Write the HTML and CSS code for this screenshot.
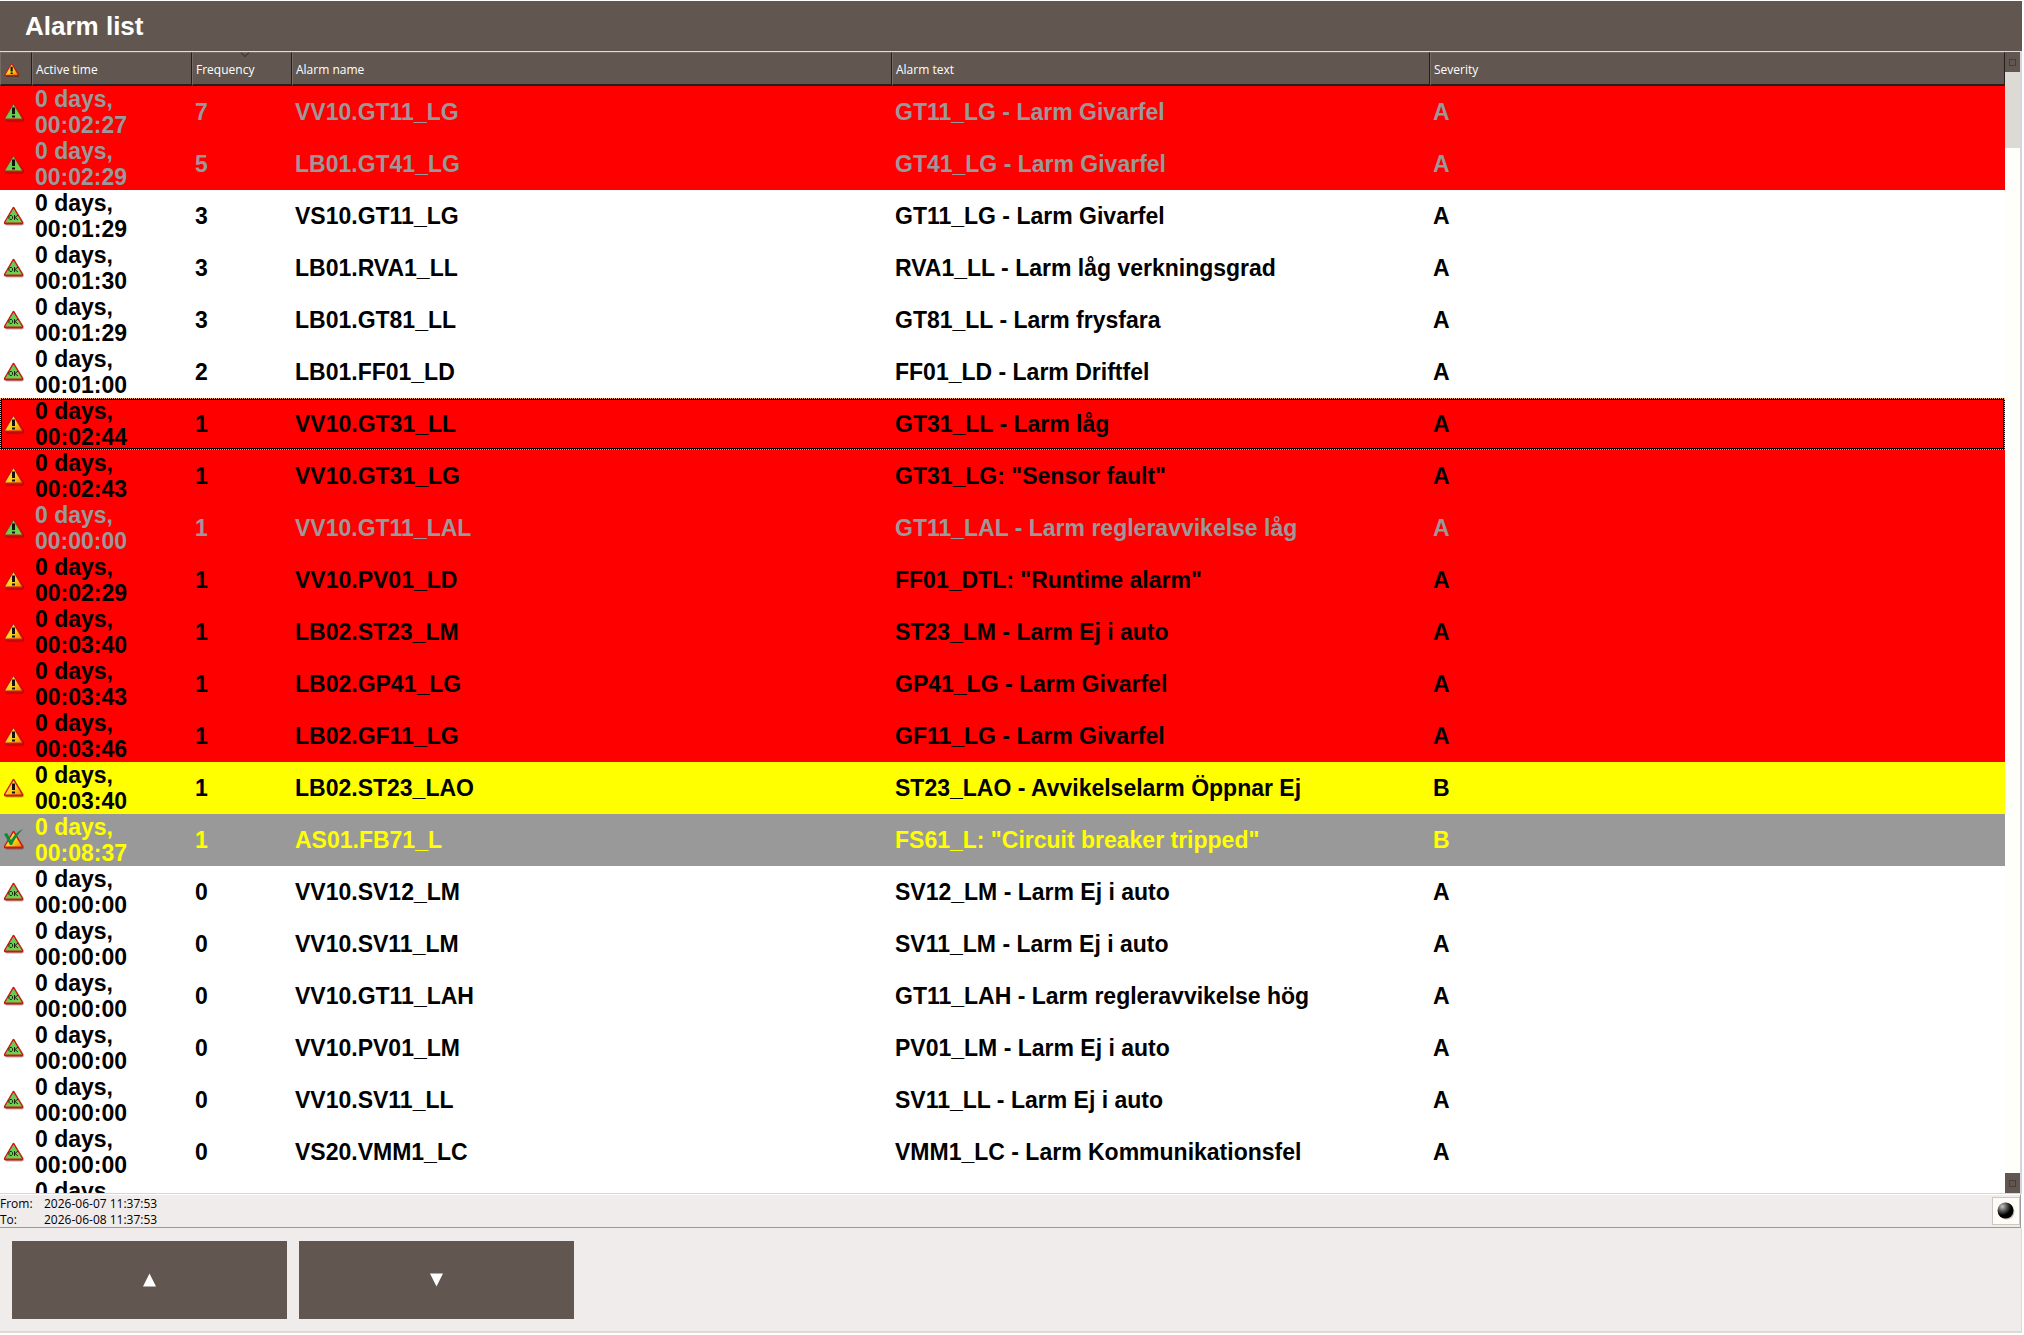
FILE: index.html
```
<!doctype html>
<html lang="sv">
<head>
    <meta charset="UTF-8">
    <meta name="viewport" content="width=device-width, initial-scale=1.0">
    <title>Alarm list</title>
    <link rel="stylesheet" href="styles.css">
</head>
<body>
    <!-- alarm state icons -->
    <svg class="sprite" aria-hidden="true">
        <defs>
            <linearGradient id="gold" x1="0" y1="0" x2="1" y2="1">
                <stop offset="0" stop-color="#ffe27a"/>
                <stop offset=".55" stop-color="#ffd21c"/>
                <stop offset="1" stop-color="#f08a00"/>
            </linearGradient>
            <linearGradient id="green" x1="0" y1="0" x2="1" y2="1">
                <stop offset="0" stop-color="#5fc05a"/>
                <stop offset="1" stop-color="#6fdc48"/>
            </linearGradient>
            <radialGradient id="ball" cx=".3" cy=".25" r=".55">
                <stop offset="0" stop-color="#c4c4c4"/>
                <stop offset=".6" stop-color="#4a4a4a"/>
                <stop offset="1" stop-color="#000"/>
            </radialGradient>
        </defs>
        <symbol id="rim" viewBox="0 0 22 22">
            <path d="M11.5 3L21 17.5Q21 20.5 19 20.5H4Q2 20.5 3 18Z" fill="#000" opacity=".3"/>
            <path d="M9.5 2.5Q10.500 1 11.5 2.5L20 17Q20.5 19.5 18.5 19.5H2.5Q.5 19.5 1 17Z" fill="#d01414"/>
        </symbol>
        <symbol id="active" viewBox="0 0 22 22">
            <use href="#rim"/>
            <path d="M10.5 3.5L18.8 17.5H2.2Z" fill="url(#gold)"/>
            <path d="M9 6.5H12V13H9ZM9 14.5H12V16.5H9Z" fill="#111"/>
        </symbol>
        <symbol id="inactive" viewBox="0 0 22 22">
            <use href="#rim"/>
            <path d="M10.5 3.5L18.8 17.5H2.2Z" fill="url(#green)"/>
            <path d="M9 6.5H12V13H9ZM9 14.5H12V16.5H9Z" fill="#111"/>
        </symbol>
        <symbol id="normal" viewBox="0 0 22 22">
            <use href="#rim"/>
            <path d="M10.5 3.5L18.8 17.5H2.2Z" fill="url(#green)"/>
            <path d="M7 10.5H8.5L9.5 11.5V13.5L8.5 14.5H7L6 13.5V11.5ZM11.5 10V15M15 10L12 12.5L15 15" fill="none" stroke="#111" stroke-width=".9"/>
        </symbol>
        <symbol id="acked" viewBox="0 0 22 22">
            <use href="#rim"/>
            <path d="M10.5 3.5L18.8 17.5H2.2Z" fill="url(#gold)"/>
            <path d="M1 5L4 4L8 11Q13 3 20 0Q13 7 9 16H7Q4 10 1 5Z" fill="#0d8a3c"/>
        </symbol>
    </svg>

    <main class="alarm-page">
        <h1>Alarm list</h1>

        <div class="list">
            <div class="viewport">
                <table>
                    <colgroup>
                        <col class="col-state">
                        <col class="col-time">
                        <col class="col-freq">
                        <col class="col-name">
                        <col class="col-text">
                        <col>
                    </colgroup>
                    <thead>
                        <tr>
                            <th><svg class="icon" role="img" aria-label="State"><use href="#active"/></svg></th>
                            <th>Active time</th>
                            <th class="sorted">Frequency</th>
                            <th>Alarm name</th>
                            <th>Alarm text</th>
                            <th>Severity</th>
                        </tr>
                    </thead>
                    <tbody id="alarms"></tbody>
                </table>
            </div>
            <div class="scrollbar">
                <button class="scroll-btn" aria-label="Scroll up"></button>
                <div class="thumb"></div>
                <button class="scroll-btn" aria-label="Scroll down"></button>
            </div>
        </div>

        <div class="status">
            <dl>
                <dt>From:</dt><dd>2026-06-07 11:37:53</dd>
                <dt>To:</dt><dd>2026-06-08 11:37:53</dd>
            </dl>
            <span class="led">
                <svg viewBox="0 0 18 18"><circle cx="9.5" cy="9.5" r="8" fill="#000" opacity=".25"/><circle cx="8.5" cy="8.5" r="8" fill="url(#ball)"/></svg>
            </span>
        </div>

        <div class="toolbar">
            <button class="nav-btn" aria-label="Up"><svg viewBox="0 0 14 14"><path d="M7 0L14 14H0Z"/></svg></button>
            <button class="nav-btn" aria-label="Down"><svg viewBox="0 0 14 14"><path d="M0 0H14L7 14Z"/></svg></button>
        </div>
    </main>

    <script src="alarms.js"></script>
</body>
</html>
```
FILE: styles.css
```
* {
    margin: 0;
    padding: 0;
    box-sizing: border-box;
}

body {
    background: #fff;
    font-family: "Liberation Sans", Arial, sans-serif;
}

button {
    border: none;
    cursor: pointer;
}

.sprite {
    position: absolute;
    width: 0;
    height: 0;
}

.alarm-page {
    display: flex;
    flex-direction: column;
    height: 100vh;
    padding: 1px 2px 2px 0;
}

h1 {
    height: 50px;
    padding-left: 25px;
    background: #625750;
    color: #fff;
    font-size: 26px;
    line-height: 50px;
}

/* list */
.list {
    display: flex;
    flex: 1;
    min-height: 0;
    border-top: 1px solid #e0dcdc;
    border-right: 2px solid #d5d5dc;
    border-bottom: 1px solid #d8d5d8;
}

.viewport {
    flex: 1;
    overflow: hidden;
}

table {
    width: 100%;
    table-layout: fixed;
    border-collapse: separate;
    border-spacing: 0;
}

.col-state {
    width: 32px;
}

.col-time {
    width: 160px;
}

.col-freq {
    width: 100px;
}

.col-name {
    width: 600px;
}

.col-text {
    width: 538px;
}

th {
    position: relative;
    height: 34px;
    padding: 2px 3px 0;
    border-top: 1px solid #776c65;
    border-left: 1px solid #776c65;
    border-right: 1px solid #231f1d;
    border-bottom: 2px solid #231f1d;
    background: #625750;
    color: #fff;
    font: 12px/16px "Open Sans", "Noto Sans", sans-serif;
    text-align: left;
}

.sorted::after {
    content: "";
    position: absolute;
    top: -3px;
    left: 50%;
    width: 5px;
    height: 5px;
    border-right: 1px solid #3c3632;
    border-bottom: 1px solid #3c3632;
    transform: rotate(45deg);
}

td {
    height: 52px;
    padding: 0 3px;
    font-size: 23px;
    font-weight: bold;
    line-height: 26px;
}

.icon {
    display: block;
    width: 22px;
    height: 22px;
}

th .icon {
    width: 16px;
    height: 16px;
}

.alarm,
.gone {
    background: #f00;
}

.gone {
    color: #999;
}

.warning {
    background: #ff0;
}

.acked {
    background: #999;
    color: #ff0;
}

/* focus frame: light dots on a solid black line */
.selected {
    outline: 1px dotted #fa6;
    outline-offset: -1px;
    box-shadow: inset 0 0 0 2px #000;
}

/* scrollbar */
.scrollbar {
    display: flex;
    flex-direction: column;
    width: 15px;
    background: #fefefb;
}

.scroll-btn {
    height: 20px;
    background: #625750;
}

.scroll-btn::before {
    content: "";
    display: block;
    width: 5px;
    height: 5px;
    margin: 0 auto;
    border: 1px solid #453d38;
}

.thumb {
    height: 76px;
    margin-bottom: auto;
    background: #dddad5;
}

/* status row */
.status {
    display: flex;
    justify-content: space-between;
    align-items: center;
    height: 34px;
    margin-right: 1px;
    border-top: 1px solid #fff;
    border-right: 1px solid #999;
    border-bottom: 1px solid #999;
    background: #f0eceb;
}

dl {
    display: grid;
    grid-template-columns: 44px auto;
    padding-top: 2px;
    font: 12px/16px "Open Sans", "Noto Sans", sans-serif;
}

.led {
    display: flex;
    justify-content: center;
    align-items: center;
    width: 28px;
    height: 28px;
    border: 1px solid #ccc8c4;
    background: #fffcf7;
}

.led svg {
    width: 18px;
    height: 18px;
}

/* bottom buttons */
.toolbar {
    display: flex;
    gap: 12px;
    padding: 13px 12px 12px;
    border-right: 1px solid #dcd9d8;
    border-bottom: 2px solid #dcd9d8;
    background: #f0eceb;
}

.nav-btn {
    width: 275px;
    height: 78px;
    padding-top: 2px;
    background: #625750;
}

.nav-btn svg {
    width: 13px;
    height: 14px;
    fill: #fff;
}
```
FILE: alarms.js
```
// state icon, row class, time, frequency, name, text, severity
const alarms = [
    ['inactive', 'gone', '00:02:27', 7, 'VV10.GT11_LG', 'GT11_LG - Larm Givarfel', 'A'],
    ['inactive', 'gone', '00:02:29', 5, 'LB01.GT41_LG', 'GT41_LG - Larm Givarfel', 'A'],
    ['normal', '', '00:01:29', 3, 'VS10.GT11_LG', 'GT11_LG - Larm Givarfel', 'A'],
    ['normal', '', '00:01:30', 3, 'LB01.RVA1_LL', 'RVA1_LL - Larm låg verkningsgrad', 'A'],
    ['normal', '', '00:01:29', 3, 'LB01.GT81_LL', 'GT81_LL - Larm frysfara', 'A'],
    ['normal', '', '00:01:00', 2, 'LB01.FF01_LD', 'FF01_LD - Larm Driftfel', 'A'],
    ['active', 'alarm selected', '00:02:44', 1, 'VV10.GT31_LL', 'GT31_LL - Larm låg', 'A'],
    ['active', 'alarm', '00:02:43', 1, 'VV10.GT31_LG', 'GT31_LG: "Sensor fault"', 'A'],
    ['inactive', 'gone', '00:00:00', 1, 'VV10.GT11_LAL', 'GT11_LAL - Larm regleravvikelse låg', 'A'],
    ['active', 'alarm', '00:02:29', 1, 'VV10.PV01_LD', 'FF01_DTL: "Runtime alarm"', 'A'],
    ['active', 'alarm', '00:03:40', 1, 'LB02.ST23_LM', 'ST23_LM - Larm Ej i auto', 'A'],
    ['active', 'alarm', '00:03:43', 1, 'LB02.GP41_LG', 'GP41_LG - Larm Givarfel', 'A'],
    ['active', 'alarm', '00:03:46', 1, 'LB02.GF11_LG', 'GF11_LG - Larm Givarfel', 'A'],
    ['active', 'warning', '00:03:40', 1, 'LB02.ST23_LAO', 'ST23_LAO - Avvikelselarm Öppnar Ej', 'B'],
    ['acked', 'acked', '00:08:37', 1, 'AS01.FB71_L', 'FS61_L: "Circuit breaker tripped"', 'B'],
    ['normal', '', '00:00:00', 0, 'VV10.SV12_LM', 'SV12_LM - Larm Ej i auto', 'A'],
    ['normal', '', '00:00:00', 0, 'VV10.SV11_LM', 'SV11_LM - Larm Ej i auto', 'A'],
    ['normal', '', '00:00:00', 0, 'VV10.GT11_LAH', 'GT11_LAH - Larm regleravvikelse hög', 'A'],
    ['normal', '', '00:00:00', 0, 'VV10.PV01_LM', 'PV01_LM - Larm Ej i auto', 'A'],
    ['normal', '', '00:00:00', 0, 'VV10.SV11_LL', 'SV11_LL - Larm Ej i auto', 'A'],
    ['normal', '', '00:00:00', 0, 'VS20.VMM1_LC', 'VMM1_LC - Larm Kommunikationsfel', 'A'],
    // cut by the bottom edge of the list, only the first line shows
    ['', '', '00:00:00', '', '', '', '']
];

document.querySelector('#alarms').innerHTML = alarms.map(function (a) {
    const icon = a[0] ? `<svg class="icon"><use href="#${a[0]}"/></svg>` : '';
    return `<tr class="${a[1]}">
        <td>${icon}</td>
        <td>0 days, ${a[2]}</td>
        <td>${a[3]}</td>
        <td>${a[4]}</td>
        <td>${a[5]}</td>
        <td>${a[6]}</td>
    </tr>`;
}).join('');
```
